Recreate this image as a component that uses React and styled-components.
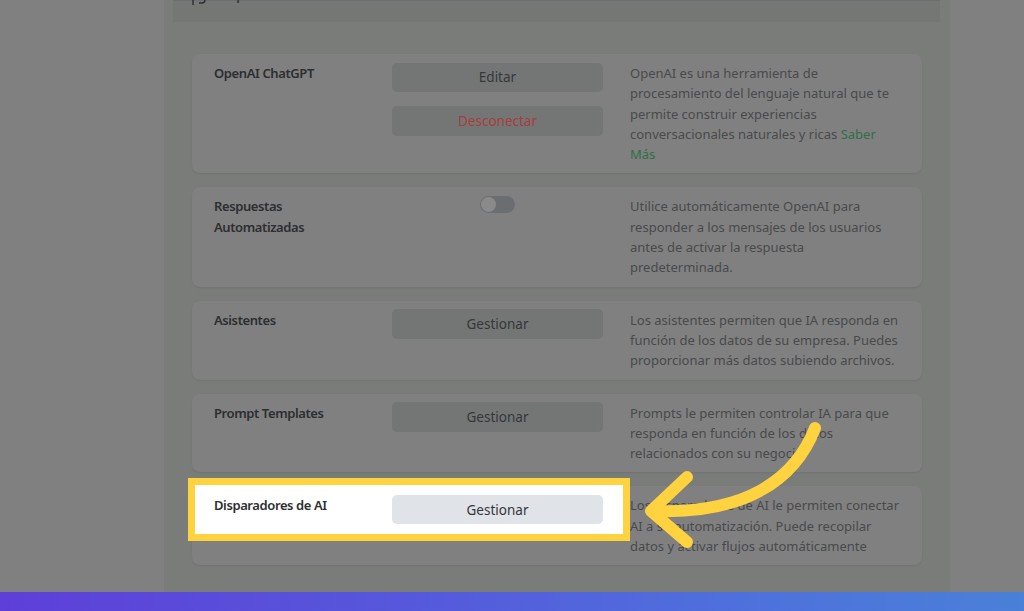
import styled, { createGlobalStyle } from "styled-components";

const GlobalStyle = createGlobalStyle`
  html, body {
    margin: 0;
    height: 100%;
  }
  body {
    background: #808080;
    font-family: "Noto Sans", "Open Sans", sans-serif;
    overflow: hidden;
  }
`;

const Page = styled.div`
  position: relative;
  height: 611px;
  overflow: hidden;
  display: flex;
  flex-direction: column;
`;

const Content = styled.main`
  flex: 1;
  min-height: 0;
  overflow: hidden;
  display: flex;
`;

const Panel = styled.section`
  width: 786px;
  margin-left: 164px;
  background: #7a7c7a;
  padding: 0 10px 0 9px;
  box-sizing: border-box;
`;

const Header = styled.header`
  height: 22px;
  background: #757775;
  box-shadow: inset 0 1px 0 #6c6e72;
  margin-bottom: 32px;
  overflow: hidden;
  display: flex;
  align-items: flex-start;
  gap: 18px;
  padding-left: 17px;
`;

const HeaderTitle = styled.span`
  font-size: 13px;
  font-weight: 500;
  color: #2c2e30;
  line-height: 16px;
  margin-top: -13px;
`;

const HeaderIcon = styled.svg`
  flex: none;
  width: 18px;
  height: 18px;
  margin-top: -11px;
`;

const CardList = styled.div`
  display: flex;
  flex-direction: column;
  gap: 14px;
  padding: 0 18px 0 19px;
`;

const Card = styled.article`
  display: grid;
  grid-template-columns: 411px 1fr;
  column-gap: 27px;
  background: #808080;
  border-radius: 8px;
  padding: 9px 0;
  box-shadow: 0 1px 2px rgba(0, 0, 0, 0.08);
`;

const Lead = styled.div`
  display: grid;
  grid-template-columns: 178px 211px;
  padding-left: 22px;
  align-items: start;
  ${(p) => p.$spotlight && `
    position: relative;
    align-self: start;
    width: 428px;
    height: 49px;
    box-sizing: border-box;
    margin: -10px 0 0 3px;
    padding: 10px 0 0 19px;
    background: #fff;
    box-shadow: 0 0 0 7px #ffd23f;
  `}
`;

const Label = styled.h3`
  margin: 0;
  font-size: 13px;
  line-height: 20.3px;
  font-weight: 600;
  letter-spacing: -0.4px;
  color: #2c2e30;
`;

const Actions = styled.div`
  display: flex;
  flex-direction: column;
  align-items: stretch;
  gap: 14.5px;
`;

const Action = styled.button`
  height: 29.5px;
  border: 0;
  border-radius: 5px;
  padding: 0;
  margin-top: -0.5px;
  background: ${(p) => (p.$spotlight ? "#e0e3e8" : "#747675")};
  color: ${(p) => (p.$danger ? "#a83c3c" : "#35373a")};
  font: inherit;
  font-size: 13.5px;
`;

const Toggle = styled.span`
  position: relative;
  display: block;
  justify-self: center;
  width: 35px;
  height: 17px;
  border-radius: 9px;
  background: #6a6e72;

  &::before {
    content: "";
    position: absolute;
    left: 1px;
    top: 1px;
    width: 15px;
    height: 15px;
    border-radius: 50%;
    background: #8a8a8a;
  }
`;

const Description = styled.p`
  margin: 0;
  font-size: 13px;
  line-height: 20.3px;
  color: #484a4c;
  white-space: nowrap;
`;

const MoreLink = styled.a`
  color: #2f6f47;
  text-decoration: none;
`;

const Arrow = styled.svg`
  position: absolute;
  left: 640px;
  top: 420px;
  width: 190px;
  height: 130px;
`;

const BottomBar = styled.footer`
  flex: none;
  height: 19px;
  background: linear-gradient(95deg, #5e3fd8 0%, #5658dc 40%, #4f6fdc 70%, #4a80d8 100%);
`;

const cards = [
  {
    label: "OpenAI ChatGPT",
    actions: [{ text: "Editar" }, { text: "Desconectar", danger: true }],
    lines: [
      "OpenAI es una herramienta de",
      "procesamiento del lenguaje natural que te",
      "permite construir experiencias",
    ],
    more: true,
  },
  {
    label: (
      <>
        Respuestas
        <br />
        Automatizadas
      </>
    ),
    toggle: true,
    lines: [
      "Utilice automáticamente OpenAI para",
      "responder a los mensajes de los usuarios",
      "antes de activar la respuesta",
      "predeterminada.",
    ],
  },
  {
    label: "Asistentes",
    actions: [{ text: "Gestionar" }],
    lines: [
      "Los asistentes permiten que IA responda en",
      "función de los datos de su empresa. Puedes",
      "proporcionar más datos subiendo archivos.",
    ],
  },
  {
    label: "Prompt Templates",
    actions: [{ text: "Gestionar" }],
    lines: [
      "Prompts le permiten controlar IA para que",
      "responda en función de los datos",
      "relacionados con su negocio.",
    ],
  },
  {
    label: "Disparadores de AI",
    actions: [{ text: "Gestionar" }],
    spotlight: true,
    lines: [
      "Los disparadores de AI le permiten conectar",
      "AI a su automatización. Puede recopilar",
      "datos y activar flujos automáticamente",
    ],
  },
];

function App() {
  return (
    <Page>
      <GlobalStyle />
      <Content>
        <Panel>
          <Header>
            <HeaderIcon viewBox="0 0 18 18" fill="none" stroke="#2c2e30" strokeWidth="1.4">
              <path d="M3 2v14M15 2v9a3 3 0 0 1-3 3H9" />
            </HeaderIcon>
            <HeaderTitle>OpenAI ChatGPT</HeaderTitle>
          </Header>
          <CardList>
            {cards.map((card, i) => (
              <Card key={i}>
                <Lead $spotlight={card.spotlight}>
                  <Label>{card.label}</Label>
                  {card.toggle ? (
                    <Toggle />
                  ) : (
                    <Actions>
                      {card.actions.map((a) => (
                        <Action key={a.text} $danger={a.danger} $spotlight={card.spotlight}>
                          {a.text}
                        </Action>
                      ))}
                    </Actions>
                  )}
                </Lead>
                <Description>
                  {card.lines.map((line) => (
                    <span key={line}>
                      {line}
                      <br />
                    </span>
                  ))}
                  {card.more && (
                    <>
                      conversacionales naturales y ricas <MoreLink href="#">Saber</MoreLink>
                      <br />
                      <MoreLink href="#">Más</MoreLink>
                    </>
                  )}
                </Description>
              </Card>
            ))}
          </CardList>
        </Panel>
      </Content>
      <Arrow viewBox="640 420 190 130" fill="none" stroke="#ffd23f" strokeWidth="12" strokeLinecap="round" strokeLinejoin="round">
        <path d="M815 428C795 480 745 514 655 511" />
        <path d="M687 477L651 511L687 542" />
      </Arrow>
      <BottomBar />
    </Page>
  );
}

export default App;
